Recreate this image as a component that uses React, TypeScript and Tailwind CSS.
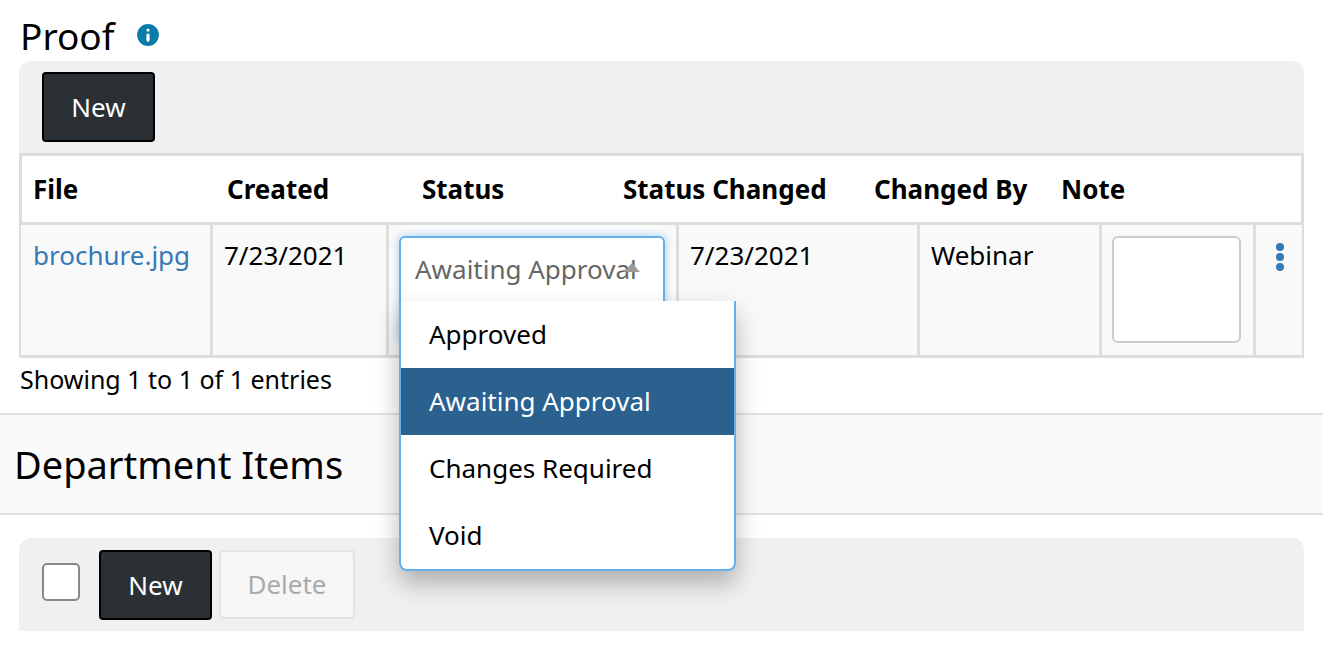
import { Info } from 'lucide-react'

const font = { } as const

const headers = [
  { label: 'File', width: 'w-[194px]' },
  { label: 'Created', width: 'w-[195px]' },
  { label: 'Status', width: 'w-[201px]' },
  { label: 'Status Changed', width: 'w-[251px]' },
  { label: 'Changed By', width: 'w-[187px]' },
  { label: 'Note', width: 'flex-1' },
]

const options = ['Approved', 'Awaiting Approval', 'Changes Required', 'Void']

function NewButton() {
  return (
    <button className="w-[113px] h-[70px] rounded-[4px] border-2 border-black bg-[#2b3035] text-white text-[26px]">
      New
    </button>
  )
}

function StatusSelect() {
  return (
    <div className="relative w-[266px] h-[106px] rounded-[6px] border-2 border-[#66afe9] bg-white shadow-[0_0_8px_rgba(102,175,233,0.6)] pl-[14px] pt-[11px] text-[26px] leading-[40px] text-[#666666]">
      Awaiting Approval
      <span className="absolute left-[223px] top-[25px] w-0 h-0 border-x-[8px] border-x-transparent border-b-[9px] border-b-[#999999]" />
      <div className="absolute left-[-2px] top-[63px] w-[337px] h-[270px] z-10 bg-white border-2 border-t-0 border-[#66afe9] rounded-b-[8px] shadow-[0_12px_24px_rgba(0,0,0,0.28)] text-black">
        {options.map((o) => (
          <div
            key={o}
            className={`h-[67px] pl-[28px] leading-[67px] ${o === 'Awaiting Approval' ? 'bg-[#2a618f] text-white' : ''}`}
          >
            {o}
          </div>
        ))}
      </div>
    </div>
  )
}

export default function App() {
  return (
    <div className="w-[1323px] h-[645px] overflow-hidden bg-white text-black font-['Noto_Sans',sans-serif]">
      <div className="px-[19px]">
        <div className="h-[61px] flex items-center gap-[19px] pl-px pt-[9px]">
          <h1 className="text-[37px] leading-none">Proof</h1>
          <Info className="w-[30px] h-[30px] fill-[#0a7aa8] text-white" strokeWidth={2.6} />
        </div>
        <div className="h-[92px] bg-[#f0f0f0] rounded-t-[12px] pl-[23px] pt-[11px]">
          <NewButton />
        </div>
        <div className="h-[69px] flex items-center bg-white border-[3px] border-[#dddddd] border-b-0 pl-[11px] text-[26px] font-bold">
          {headers.map((h) => (
            <div key={h.label} className={h.width}>{h.label}</div>
          ))}
        </div>
        <div className="h-[136px] flex bg-[#f9f9f9] border-[3px] border-x-[2px] border-[#dddddd] text-[26px]">
          <div className="w-[189px] pl-[12px] pt-[11px] text-[#337ab7]">brochure.jpg</div>
          <div className="w-[176px] border-l-[3px] border-[#dddddd] pl-[11px] pt-[11px]">7/23/2021</div>
          <div className="w-[290px] border-l-[3px] border-[#dddddd] pl-[10px] pt-[11px]">
            <StatusSelect />
          </div>
          <div className="w-[241px] border-l-[3px] border-[#dddddd] pl-[11px] pt-[11px]">7/23/2021</div>
          <div className="w-[182px] border-l-[3px] border-[#dddddd] pl-[11px] pt-[11px]">Webinar</div>
          <div className="w-[154px] border-l-[3px] border-[#dddddd] pl-[10px] pt-[11px]">
            <div className="w-[129px] h-[107px] rounded-[6px] border-2 border-[#cccccc] bg-white" />
          </div>
          <div className="flex-1 border-l-[3px] border-[#dddddd] pl-[20px] pt-[18px]">
            <div className="flex flex-col gap-[2px]">
              <span className="w-[8px] h-[8px] rounded-full bg-[#337ab7]" />
              <span className="w-[8px] h-[8px] rounded-full bg-[#337ab7]" />
              <span className="w-[8px] h-[8px] rounded-full bg-[#337ab7]" />
            </div>
          </div>
        </div>
        <div className="h-[55px] pl-px pt-[3px] text-[25px] leading-[36px]">Showing 1 to 1 of 1 entries</div>
      </div>
      <div className="h-[102px] bg-[#fafafa] border-y-2 border-[#e2e2e2] pl-[14px] flex items-center text-[38px]">
        Department Items
      </div>
      <div className="px-[19px] pt-[23px]">
        <div className="h-[93px] bg-[#f0f0f0] rounded-t-[12px] pl-[23px] pt-[12px] flex items-start">
          <div className="mt-[13px] w-[38px] h-[38px] rounded-[5px] border-2 border-[#888888] bg-white" />
          <div className="ml-[19px]"><NewButton /></div>
          <button className="ml-[7px] w-[136px] h-[69px] rounded-[4px] border-2 border-[#e3e3e3] bg-[#f6f6f6] text-[#aaaaaa] text-[26px]">
            Delete
          </button>
        </div>
      </div>
    </div>
  )
}
